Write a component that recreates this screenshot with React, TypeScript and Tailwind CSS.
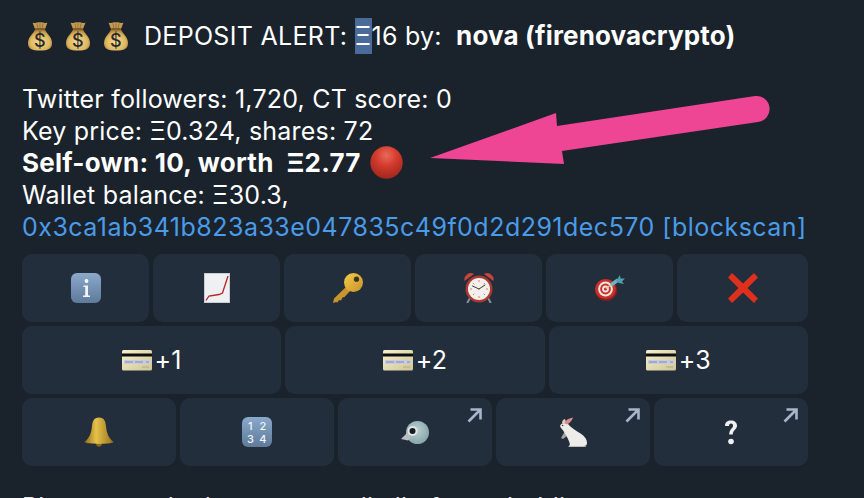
import React from "react";

const font = { fontFamily: "Inter, sans-serif" };

// Emoji drawings, the sandbox has no colour emoji font
const MoneyBag = () => (
  <svg width="24" height="30" viewBox="0 0 24 30" className="shrink-0">
    <defs>
      <radialGradient id="bag" cx="0.5" cy="0.6" r="0.62">
        <stop offset="0" stopColor="#f2dc96" />
        <stop offset="0.65" stopColor="#dfb860" />
        <stop offset="1" stopColor="#9c7230" />
      </radialGradient>
    </defs>
    <path d="M4.5 1.5 C8 3 10 0.5 12 1.5 C14 0.5 16 3 19.5 1.5 L17 8 L7 8 Z" fill="#c49a52" />
    <path d="M9 2.5 L10 8 M12 2.5 L12 8 M15 2.5 L14 8" stroke="#8f6b33" strokeWidth="0.8" />
    <path d="M7 8.5 L17 8.5 C19 13 24 16 24 22 C24 28 20 29.5 12 29.5 C4 29.5 0 28 0 22 C0 16 5 13 7 8.5 Z" fill="url(#bag)" />
    <rect x="7" y="7" width="10" height="2.2" rx="1" fill="#7f5d2c" />
    <text x="12" y="25.5" textAnchor="middle" fontSize="18" fontWeight="500" fill="#2d2a2c" style={font}>$</text>
  </svg>
);

const RedDot = () => (
  <svg width="33" height="33" viewBox="0 0 33 33" className="shrink-0">
    <defs>
      <radialGradient id="dot" cx="0.5" cy="0.28" r="0.75">
        <stop offset="0" stopColor="#e96a5c" />
        <stop offset="0.45" stopColor="#d23a2c" />
        <stop offset="1" stopColor="#9e261c" />
      </radialGradient>
    </defs>
    <circle cx="16.5" cy="16.5" r="16.2" fill="url(#dot)" />
  </svg>
);

const BlueTile = ({ children }: { children: React.ReactNode }) => (
  <svg width="30" height="30" viewBox="0 0 30 30">
    <defs>
      <linearGradient id="tile" x1="0" y1="0" x2="0" y2="1">
        <stop offset="0" stopColor="#8aa9cb" />
        <stop offset="1" stopColor="#5f7a9a" />
      </linearGradient>
    </defs>
    <rect x="0" y="0" width="30" height="30" rx="6" fill="url(#tile)" />
    {children}
  </svg>
);

const InfoIcon = () => (
  <BlueTile>
    <circle cx="15.5" cy="8" r="1.9" fill="#fff" />
    <path d="M12.5 12.5 H17 V22.5 H19 V24 H12 V22.5 H14.2 V14 H12.5 Z" fill="#f2f5f8" />
  </BlueTile>
);

const NumbersIcon = () => (
  <BlueTile>
    <text x="8.5" y="12.5" textAnchor="middle" fontSize="11" fontWeight="500" fill="#f2f5f8" style={font}>1</text>
    <text x="21" y="12.5" textAnchor="middle" fontSize="11" fontWeight="500" fill="#f2f5f8" style={font}>2</text>
    <text x="8.5" y="26" textAnchor="middle" fontSize="11" fontWeight="500" fill="#f2f5f8" style={font}>3</text>
    <text x="21" y="26" textAnchor="middle" fontSize="11" fontWeight="500" fill="#f2f5f8" style={font}>4</text>
  </BlueTile>
);

const ChartIcon = () => (
  <svg width="26" height="30" viewBox="0 0 26 30">
    <rect x="0" y="0" width="26" height="30" fill="#c9ccd2" />
    <rect x="1" y="1" width="24" height="28" fill="#eef0f3" />
    <path d="M2 27.5 L5 23 L15 21.5 L18.5 20 L24 3" fill="none" stroke="#b5261d" strokeWidth="1.3" />
  </svg>
);

const KeyIcon = () => (
  <svg width="30" height="30" viewBox="0 0 30 30">
    <defs>
      <linearGradient id="key" x1="0" y1="0" x2="1" y2="1">
        <stop offset="0" stopColor="#f4cd4a" />
        <stop offset="1" stopColor="#c8912a" />
      </linearGradient>
    </defs>
    <path d="M14 13 L1 25.5 L0 30 L3 29 L4.5 29.5 L6 27 L8 27.5 L9.5 24.5 L11.5 24 L18 17 Z" fill="#c8942c" />
    <circle cx="20.5" cy="9.5" r="9.5" fill="url(#key)" />
    <circle cx="23.5" cy="6.2" r="2.6" fill="#3a3320" />
  </svg>
);

const AlarmIcon = () => (
  <svg width="30" height="30" viewBox="0 0 30 30">
    <path d="M6 25 L3.5 29.5 M24 25 L26.5 29.5" stroke="#8a8f96" strokeWidth="2" strokeLinecap="round" />
    <path d="M0.5 8 A6.5 6.5 0 0 1 10 1 Z M29.5 8 A6.5 6.5 0 0 0 20 1 Z" fill="#c8453a" />
    <circle cx="15" cy="16" r="13.5" fill="#a83a30" />
    <circle cx="15" cy="16" r="11" fill="#f3efec" />
    <path d="M15 7 V9 M15 23 V25 M6 16 H8 M22 16 H24 M9 10 L10.3 11.3 M21 10 L19.7 11.3 M9 22 L10.3 20.7 M21 22 L19.7 20.7" stroke="#d08078" strokeWidth="1" />
    <path d="M15 16 L8.5 13 M15 16 L21 12" stroke="#3a3a3c" strokeWidth="1" strokeLinecap="round" />
  </svg>
);

const TargetIcon = () => (
  <svg width="30" height="26" viewBox="0 0 30 26">
    <ellipse cx="11" cy="15" rx="11" ry="10.8" fill="#8a1f1a" />
    <ellipse cx="10.5" cy="14" rx="10.4" ry="10" fill="#c8302a" />
    <circle cx="10.5" cy="14" r="7.4" fill="#f0e5e2" />
    <circle cx="10.5" cy="14" r="5.4" fill="#c8302a" />
    <circle cx="10.5" cy="14" r="3.4" fill="#f0e5e2" />
    <circle cx="10.5" cy="14" r="1.6" fill="#c8302a" />
    <path d="M11 13.5 L18 8" stroke="#e8c58a" strokeWidth="1.2" />
    <path d="M16 10 L23 5" stroke="#6cb4c4" strokeWidth="3.6" />
    <path d="M21 6 L25 0 L25.5 3.5 L30 3.5 L27 6.5 L29 9 L24 8 Z" fill="#4e9fb0" />
  </svg>
);

const CrossIcon = () => (
  <svg width="30" height="30" viewBox="0 0 30 30">
    <path d="M4 0 L15 10.5 L26 0 L30 4.5 L19.5 15 L30 25.5 L26 30 L15 19.5 L4 30 L0 25.5 L10.5 15 L0 4.5 Z" fill="#df2f1d" />
  </svg>
);

const CardIcon = () => (
  <svg width="30" height="21" viewBox="0 0 30 21" className="shrink-0">
    <defs>
      <linearGradient id="card" x1="0" y1="0" x2="1" y2="1">
        <stop offset="0" stopColor="#f5f0cf" />
        <stop offset="1" stopColor="#cfc596" />
      </linearGradient>
    </defs>
    <rect x="0" y="0" width="30" height="20.5" rx="1.5" fill="url(#card)" />
    <rect x="0" y="3.5" width="30" height="3" fill="#0e0e0c" />
    <rect x="2" y="10" width="26" height="4" fill="#c6cbe0" />
    <path d="M3 12 H11 M13 12 H21 M24 12 H27" stroke="#6f78a8" strokeWidth="0.8" />
    <path d="M20 17 H27" stroke="#b5ab7c" strokeWidth="1" />
  </svg>
);

const BellIcon = () => (
  <svg width="30" height="30" viewBox="0 0 30 30">
    <defs>
      <linearGradient id="bell" x1="0" y1="0" x2="1" y2="0">
        <stop offset="0" stopColor="#8f6a16" />
        <stop offset="0.4" stopColor="#e6c24c" />
        <stop offset="1" stopColor="#96701a" />
      </linearGradient>
    </defs>
    <circle cx="15" cy="27" r="2.8" fill="#8a6718" />
    <path d="M15 0.5 C20 0.5 21.5 4 22 9 C22.6 16 24.5 21 29.5 25 C27 27.5 3 27.5 0.5 25 C5.5 21 7.4 16 8 9 C8.5 4 10 0.5 15 0.5 Z" fill="url(#bell)" />
  </svg>
);

const BirdIcon = () => (
  <svg width="28" height="23" viewBox="0 0 28 23">
    <defs>
      <radialGradient id="bird" cx="0.45" cy="0.4" r="0.7">
        <stop offset="0" stopColor="#bcd0d2" />
        <stop offset="1" stopColor="#7f9ea2" />
      </radialGradient>
    </defs>
    <circle cx="16.5" cy="11.5" r="11.5" fill="url(#bird)" />
    <path d="M7 11 L0 18 L7 19.5 L10 17 Z" fill="#b9bcc0" />
    <circle cx="11.5" cy="10" r="5" fill="#dfe8e8" />
    <circle cx="11.5" cy="10" r="3" fill="#1b1b1d" />
  </svg>
);

const RabbitIcon = () => (
  <svg width="30" height="30" viewBox="0 0 30 30">
    <path d="M7 14 L3 21 L5 22 L9 19 Z" fill="#a4a4a0" />
    <path d="M2 9 C3 6 7 5 10 7 C12 10 16 12 20 15 C26 18 29 22 29 26 C29 28 28 29 26 29 L11 29 C13 27 11 25 10 22 C8 18 6 14 3 11 Z" fill="#eeece9" />
    <path d="M11 29 H28 C29.5 29.5 27 30 24 30 H12 C10 30 10 29.5 11 29 Z" fill="#bdbdb8" />
    <path d="M6 6 C8 3 11 1 15 0.5 C14 3.5 12 6 9 7.5 Z" fill="#d98e88" />
    <path d="M4 6.5 C4 4 5 2.5 7 2 C8 3.5 7.5 5 6.5 6.5 Z" fill="#e6c9c4" />
    <circle cx="4.6" cy="8.5" r="0.8" fill="#4a2a2a" />
  </svg>
);

const QuestionIcon = () => (
  <svg width="14" height="26" viewBox="0 0 14 26">
    <path d="M1 7 C1 3 3.5 1.5 7 1.5 C10.5 1.5 13 3.5 13 6.8 C13 10.5 8.8 11 8.8 15.5 H5.2 C5.2 10 9 9.5 9 6.8 C9 5.5 8.2 4.6 7 4.6 C5.6 4.6 5 5.6 5 7 Z" fill="#eef0f2" />
    <circle cx="7" cy="22.5" r="2.8" fill="#eef0f2" />
  </svg>
);

const CornerArrow = () => (
  <svg width="15" height="15" viewBox="0 0 15 15" className="absolute right-[10px] top-[10px]">
    <path d="M1.5 13.5 L13 2 M3.5 1.5 H13.5 V11.5" fill="none" stroke="#a9b5c8" strokeWidth="2.6" />
  </svg>
);

const KeyButton = ({ children, link = false }: { children: React.ReactNode; link?: boolean }) => (
  <button className="relative flex h-[68px] items-center justify-center rounded-[10px] bg-[#232e3d] text-[25px] text-white">
    {children}
    {link && <CornerArrow />}
  </button>
);

const CardButton = ({ amount }: { amount: string }) => (
  <KeyButton>
    <span className="flex items-center gap-[3px]">
      <CardIcon />
      {amount}
    </span>
  </KeyButton>
);

export default function App() {
  return (
    <div className="relative h-[498px] w-[864px] overflow-hidden bg-[#1a222c] text-white" style={font}>
      <div className="px-[22px] pt-5 text-[25px] leading-8 tracking-[0.2px]">
        <div className="flex h-8 items-center pl-[6px]">
          <div className="flex gap-[14px]">
            <MoneyBag />
            <MoneyBag />
            <MoneyBag />
          </div>
          <span className="ml-[16px] whitespace-pre tracking-[0.3px]">DEPOSIT ALERT: </span>
          <span className="flex h-9 w-[17px] items-center justify-center bg-[#4a6a9a]">Ξ</span>
          <span className="whitespace-pre">16 by:  </span>
          <span className="text-[26px] font-bold tracking-[0.15px]">nova (firenovacrypto)</span>
        </div>

        <div className="mt-[31px]">Twitter followers: 1,720, CT score: 0</div>
        <div>Key price: Ξ0.324, shares: 72</div>
        <div className="flex h-8 items-center text-[26px] font-bold tracking-[0.25px]">
          <span className="whitespace-pre">Self-own: 10, worth  Ξ2.77</span>
          <span className="mb-[1px] ml-[9px]">
            <RedDot />
          </span>
        </div>
        <div>Wallet balance: Ξ30.3,</div>
        <div className="whitespace-nowrap tracking-[0.48px] text-[#4a9be8]">0x3ca1ab341b823a33e047835c49f0d2d291dec570 [blockscan]</div>

        {/* Inline keyboard */}
        <div className="mt-[11px] flex w-[786px] flex-col gap-1">
          <div className="grid grid-cols-[127px_127px_127px_127px_127px_131px] gap-1">
            <KeyButton><InfoIcon /></KeyButton>
            <KeyButton><ChartIcon /></KeyButton>
            <KeyButton><KeyIcon /></KeyButton>
            <KeyButton><AlarmIcon /></KeyButton>
            <KeyButton><TargetIcon /></KeyButton>
            <KeyButton><CrossIcon /></KeyButton>
          </div>
          <div className="grid grid-cols-3 gap-1">
            <CardButton amount="+1" />
            <CardButton amount="+2" />
            <CardButton amount="+3" />
          </div>
          <div className="grid grid-cols-5 gap-1">
            <KeyButton><BellIcon /></KeyButton>
            <KeyButton><NumbersIcon /></KeyButton>
            <KeyButton link><BirdIcon /></KeyButton>
            <KeyButton link><RabbitIcon /></KeyButton>
            <KeyButton link><QuestionIcon /></KeyButton>
          </div>
        </div>

        <div className="mt-[25px] whitespace-nowrap text-[#e6e8ea]">Please use the buttons to sell all of your holdings</div>
      </div>

      {/* Annotation arrow drawn over the message */}
      <svg width="864" height="498" viewBox="0 0 864 498" className="pointer-events-none absolute left-0 top-0">
        <path
          d="M430 158 L556 113 L557 126 L755 96 A13 13 0 0 1 758 122 L562 151 L564 164 Z"
          fill="#ee4595"
        />
      </svg>
    </div>
  );
}
